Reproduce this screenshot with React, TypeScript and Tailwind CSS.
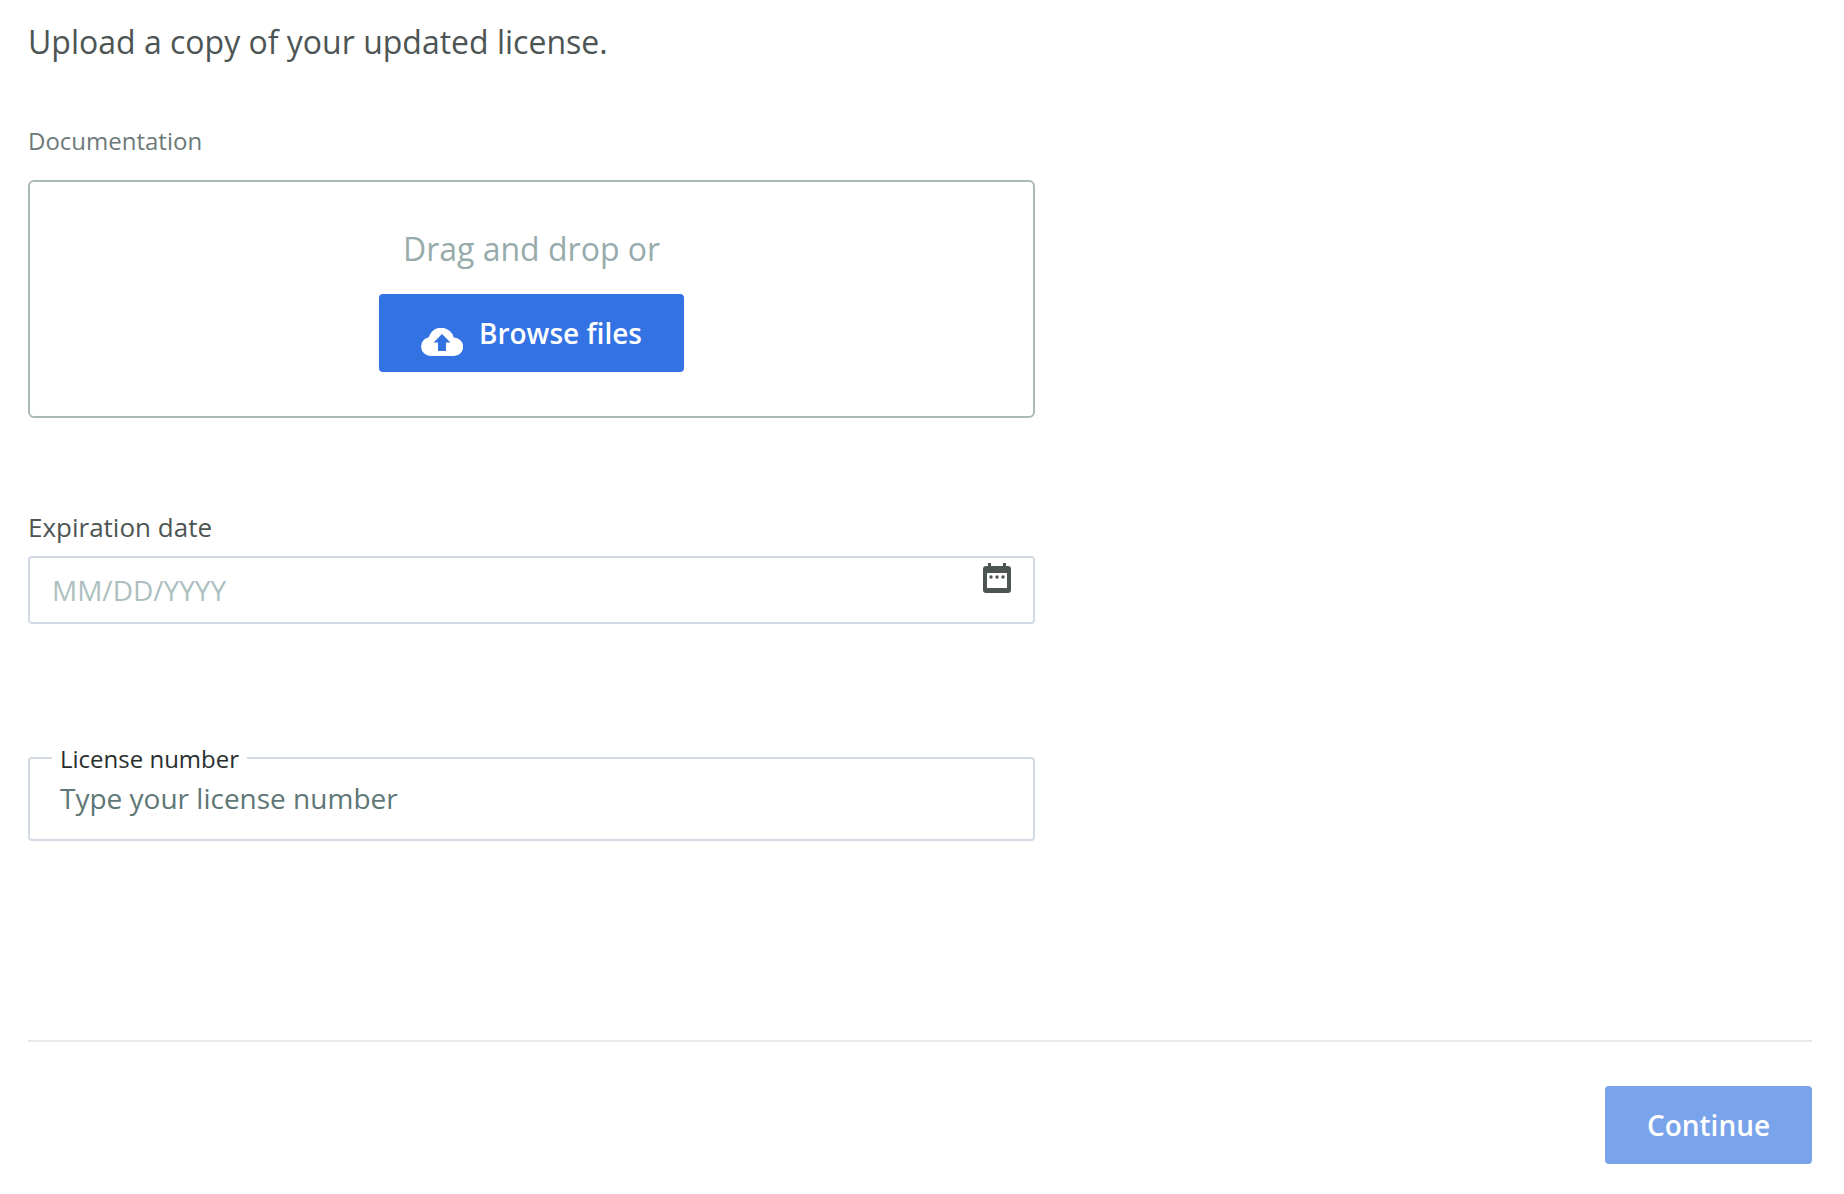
export default function App() {
  return (
    <div className="relative flex h-[1194px] w-[1844px] flex-col overflow-hidden bg-white px-[28px] font-['Open_Sans',sans-serif]">
      <h1 className="mt-[20px] h-[44px] text-[32px] leading-[44px] font-normal text-[#4d5554]">Upload a copy of your updated license.</h1>
      <div className="mt-[62px] h-[30px] text-[24px] leading-[30px] text-[#6c7a7a]">Documentation</div>
      <div className="mt-[24px] flex h-[238px] w-[1007px] flex-col items-center rounded-[6px] border-2 border-[#a9b9b9]">
        <div className="mt-[45px] text-[32px] leading-[44px] text-[#97abab]">Drag and drop or</div>
        <button className="mt-[23px] flex h-[78px] w-[305px] items-center justify-center gap-[16px] rounded-[4px] bg-[#3372e3] text-[28px] font-semibold text-white">
          <svg width="42" height="28" viewBox="0 0 42 28" className="mt-[18px]">
            <path fill="#fff" d="M9.500 28a9.500 9.500 0 0 1-1.800-18.800A13 13 0 0 1 32.800 9.500A9.250 9.250 0 0 1 33 28z" />
            <path fill="#3372e3" d="M21 6 29.500 14.500H25V23H17V14.500H12.500z" />
          </svg>
          <span className="mt-[-1px]">Browse files</span>
        </button>
      </div>
      <label className="mt-[91px] h-[36px] text-[26px] leading-[36px] text-[#4d5554]">Expiration date</label>
      <div className="relative mt-[11px] flex h-[68px] w-[1007px] items-center rounded-[4px] border-2 border-[#d3dae6] pl-[22px]">
        <span className="text-[28px] text-[#aebfbf]">MM/DD/YYYY</span>
        <svg width="28" height="30" viewBox="0 0 28 30" className="absolute top-[5px] right-[22px]">
          <rect x="5" y="0" width="3" height="6" fill="#4d5554" />
          <rect x="20" y="0" width="3" height="6" fill="#4d5554" />
          <rect x="0" y="3" width="28" height="27" rx="3" fill="#4d5554" />
          <rect x="4" y="10" width="20" height="15" fill="#fff" />
          <circle cx="8" cy="14" r="1.700" fill="#4d5554" />
          <circle cx="14" cy="14" r="1.700" fill="#4d5554" />
          <circle cx="20" cy="14" r="1.700" fill="#4d5554" />
        </svg>
      </div>
      <div className="relative mt-[133px] flex h-[84px] w-[1007px] items-center rounded-[4px] border-2 border-[#d3dae6] pl-[30px]">
        <span className="absolute top-[-15px] left-[22px] bg-white px-[8px] text-[24px] leading-[30px] text-[#282e2e]">License number</span>
        <span className="mt-[-2px] text-[28px] text-[#5f7777]">Type your license number</span>
      </div>
      <div className="mt-[199px] h-[2px] w-[1784px] bg-[#e8e9ee]" />
      <div className="mt-[44px] flex w-[1784px] justify-end">
        <button className="flex h-[78px] w-[207px] items-center justify-center rounded-[4px] bg-[#79a3ea] text-[28px] font-semibold text-white">Continue</button>
      </div>
    </div>
  );
}
